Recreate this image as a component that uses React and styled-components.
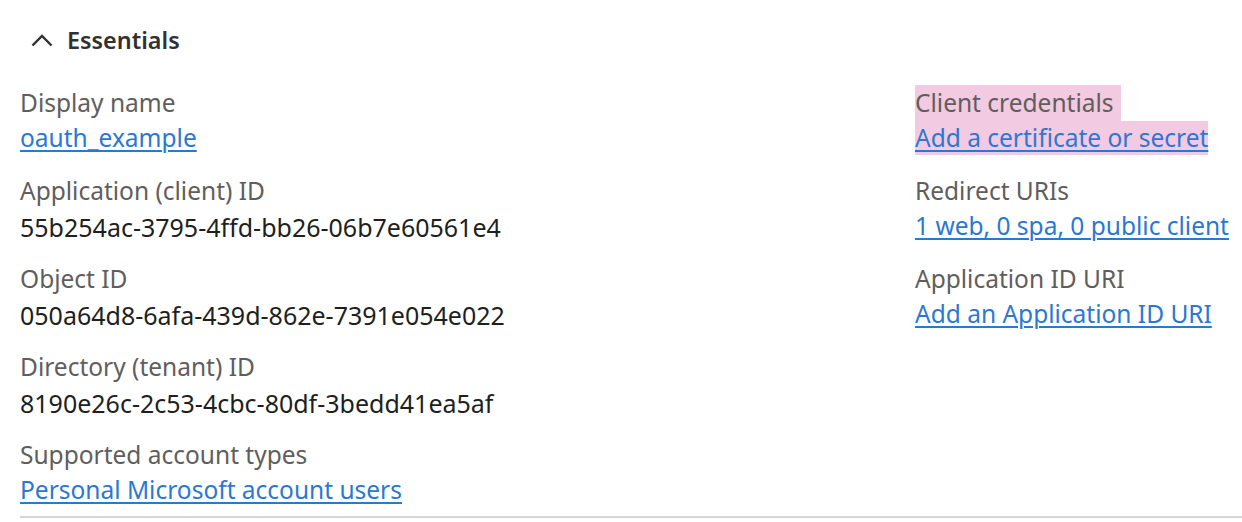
import React from "react";
import styled, { createGlobalStyle } from "styled-components";

const GlobalStyle = createGlobalStyle`
  html, body {
    margin: 0;
    padding: 0;
    background: #ffffff;
  }
  body {
    font-family: "Noto Sans", "Open Sans", "Liberation Sans", sans-serif;
  }
`;

const Panel = styled.section`
  width: 1242px;
  padding: 22px 0 0 20px;
  box-sizing: border-box;
`;

const Header = styled.button`
  display: flex;
  align-items: center;
  gap: 14px;
  height: 36px;
  padding: 0 0 0 11px;
  border: none;
  background: none;
  font-family: inherit;
  font-size: 23.4px;
  font-weight: 600;
  color: #323130;
  cursor: pointer;
`;

const Grid = styled.div`
  display: grid;
  grid-template-columns: 895px 1fr;
  margin-top: 27px;
  padding-bottom: 7px;
  border-bottom: 2px solid #d6d6d6;
`;

const Column = styled.div`
  display: flex;
  flex-direction: column;
  gap: 16px;
`;

const Field = styled.div`
  display: flex;
  flex-direction: column;
  align-items: flex-start;
`;

const Label = styled.span`
  font-size: 24.5px;
  line-height: 36px;
  color: #605e5c;
  padding-right: ${(p) => (p.highlight ? "7px" : "0")};
  background: ${(p) => (p.highlight ? "#f2cae1" : "transparent")};
`;

const Value = styled.span`
  font-size: 25px;
  line-height: 36px;
  color: #201f1e;
`;

const Link = styled.a`
  display: inline-block;
  font-size: 24.5px;
  line-height: 34px;
  height: 34px;
  margin-bottom: 2px;
  color: #2b78d2;
  text-decoration: underline;
  text-underline-offset: 3px;
  text-decoration-thickness: 2px;
  background: ${(p) => (p.highlight ? "#f2cae1" : "transparent")};
  cursor: pointer;
`;

const Chevron = () => (
  <svg width="22" height="14" viewBox="0 0 22 14" fill="none">
    <path d="M1.5 12.5 L11 3 L20.5 12.5" stroke="#323130" strokeWidth="2.4" />
  </svg>
);

const left = [
  { label: "Display name", value: "oauth_example", link: true },
  { label: "Application (client) ID", value: "55b254ac-3795-4ffd-bb26-06b7e60561e4" },
  { label: "Object ID", value: "050a64d8-6afa-439d-862e-7391e054e022" },
  { label: "Directory (tenant) ID", value: "8190e26c-2c53-4cbc-80df-3bedd41ea5af" },
  { label: "Supported account types", value: "Personal Microsoft account users", link: true },
];

const right = [
  { label: "Client credentials", value: "Add a certificate or secret", link: true, highlight: true },
  { label: "Redirect URIs", value: "1 web, 0 spa, 0 public client", link: true },
  { label: "Application ID URI", value: "Add an Application ID URI", link: true },
];

const renderField = (f) => (
  <Field key={f.label}>
    <Label highlight={f.highlight}>{f.label}</Label>
    {f.link ? (
      <Link highlight={f.highlight}>{f.value}</Link>
    ) : (
      <Value>{f.value}</Value>
    )}
  </Field>
);

export default function App() {
  return (
    <>
      <GlobalStyle />
      <Panel>
        <Header>
          <Chevron />
          Essentials
        </Header>
        <Grid>
          <Column>{left.map(renderField)}</Column>
          <Column>{right.map(renderField)}</Column>
        </Grid>
      </Panel>
    </>
  );
}
